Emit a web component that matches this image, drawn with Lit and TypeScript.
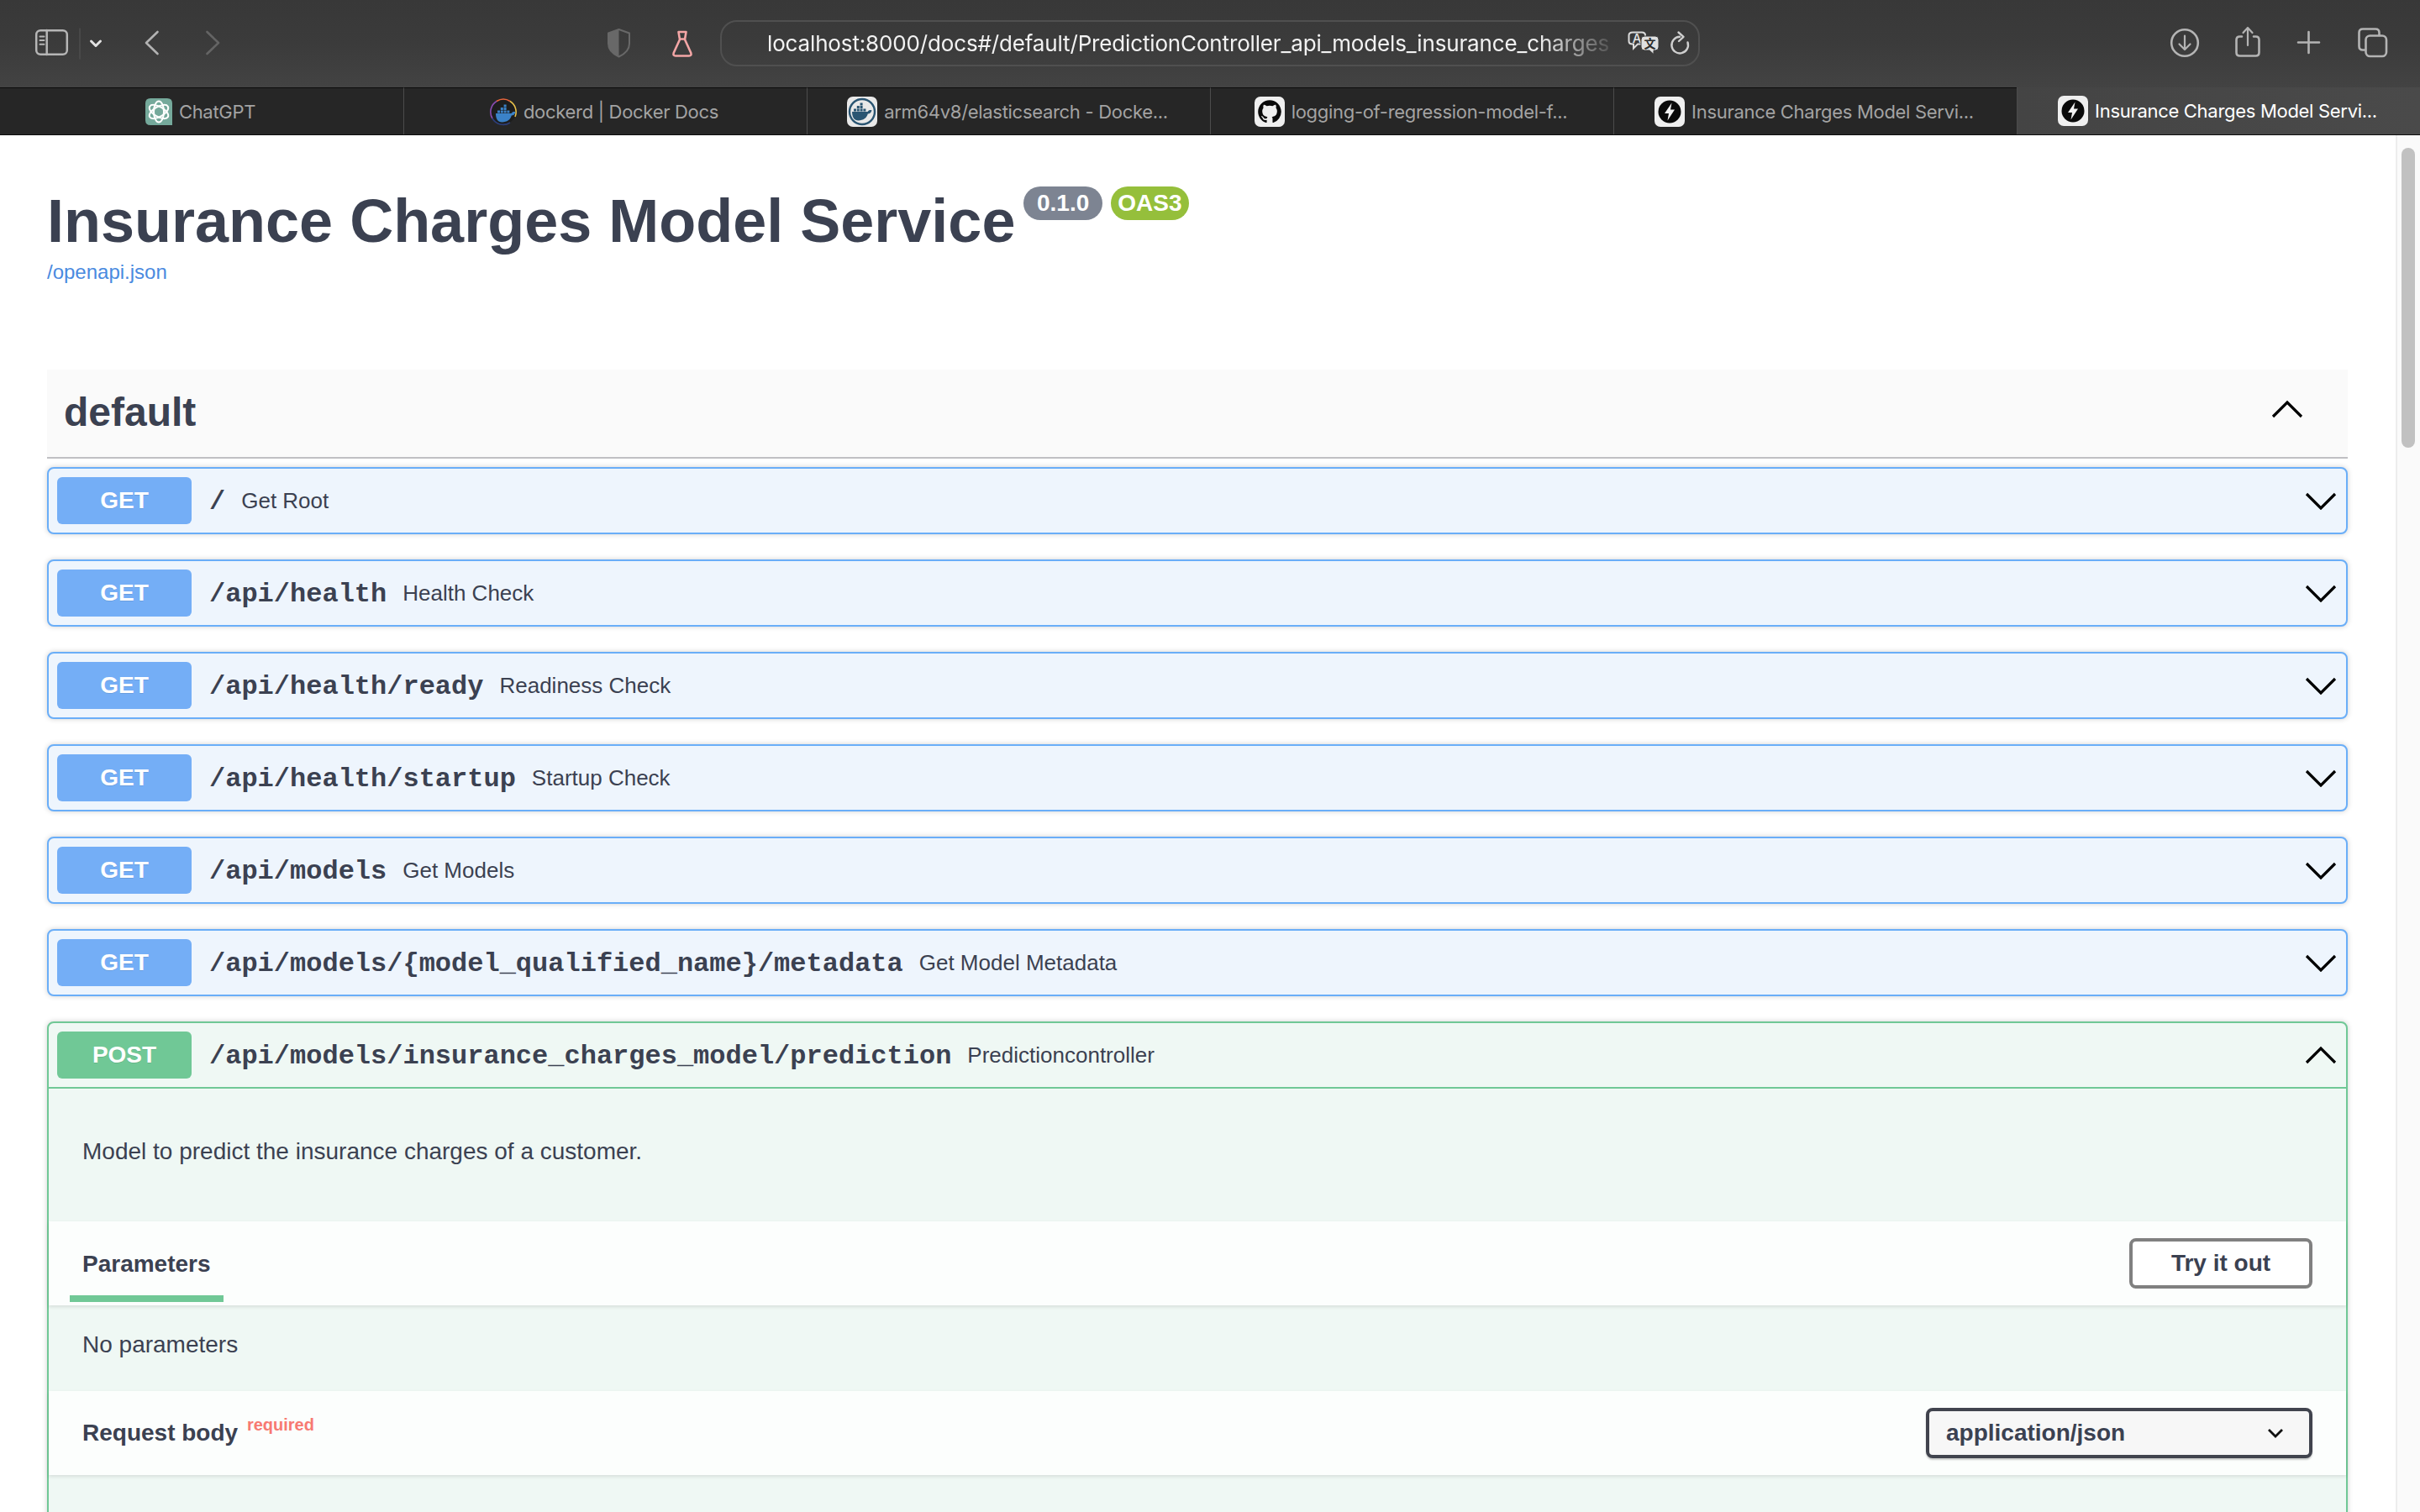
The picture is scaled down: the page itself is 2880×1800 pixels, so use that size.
import { LitElement, css, html, svg } from "lit";
import { customElement } from "lit/decorators.js";

const chevron = (up: boolean) => html`
  <svg class="chev" width="38" height="22" viewBox="0 0 38 22">
    <path d=${up ? "M2 20 L19 3 L36 20" : "M2 3 L19 20 L36 3"} fill="none" stroke="#000" stroke-width="3.2" />
  </svg>
`;

const ROUTES = [
  { path: "/", summary: "Get Root" },
  { path: "/api/health", summary: "Health Check" },
  { path: "/api/health/ready", summary: "Readiness Check" },
  { path: "/api/health/startup", summary: "Startup Check" },
  { path: "/api/models", summary: "Get Models" },
  { path: "/api/models/{model_qualified_name}/metadata", summary: "Get Model Metadata" },
];

const boltIcon = svg`
  <rect width="36" height="36" rx="7" fill="#efefef" />
  <circle cx="18" cy="18" r="13.5" fill="#0a0a0a" />
  <path d="M20.5 7.5 L12 20 H17 L15.5 28.5 L24 15.5 H19 Z" fill="#f2f2f2" />
`;

const dockerWhale = (fill: string) => svg`
  <path fill=${fill} d="M6 16 H24.5 C25.5 14 27.5 13.6 29.5 14.2 C29 17 27 18.5 24.8 18.6 C23.5 23.5 19.5 26.5 13.5 26.5 C8.5 26.5 6 22.5 6 16 Z" />
  <path fill=${fill} d="M8 12.5 h3 v3 h-3z M11.8 12.5 h3 v3 h-3z M15.6 12.5 h3 v3 h-3z M19.4 12.5 h3 v3 h-3z M11.8 9 h3 v3 h-3z M15.6 9 h3 v3 h-3z M15.6 5.5 h3 v3 h-3z" />
`;

const favicons = {
  chatgpt: html`<svg class="fav" width="32" height="32" viewBox="0 0 32 32">
    <path d="M6 0 H26 Q32 0 32 6 V32 H6 Q0 32 0 26 V6 Q0 0 6 0 Z" fill="#75a99b" />
    <g fill="none" stroke="#fff" stroke-width="2">
      <ellipse cx="16" cy="16" rx="6" ry="12.5" />
      <ellipse cx="16" cy="16" rx="6" ry="12.5" transform="rotate(60 16 16)" />
      <ellipse cx="16" cy="16" rx="6" ry="12.5" transform="rotate(120 16 16)" />
    </g>
  </svg>`,
  docker: html`<svg class="fav" width="32" height="36" viewBox="0 0 32 36">
    <circle cx="16" cy="18" r="15" fill="#1d1d1d" />
    <path d="M8 5.5 A15 15 0 0 1 24 5.5" fill="none" stroke="#e8663c" stroke-width="1.6" />
    <path d="M24 5.5 A15 15 0 0 1 30 24" fill="none" stroke="#e8c14a" stroke-width="1.6" />
    <path d="M8 5.5 A15 15 0 0 0 3 26" fill="none" stroke="#8a4bb0" stroke-width="1.6" />
    <path d="M3 26 A15 15 0 0 0 24 31" fill="none" stroke="#2c3e7a" stroke-width="1.6" />
    <g transform="translate(1 4)">${dockerWhale("#3b82c8")}</g>
  </svg>`,
  dockerHub: html`<svg class="fav" width="36" height="36" viewBox="0 0 36 36">
    <rect width="36" height="36" rx="7" fill="#e9e9e9" />
    <circle cx="18" cy="18" r="15" fill="none" stroke="#2a5572" stroke-width="2.4" />
    <g transform="translate(0 2)">${dockerWhale("#2a5572")}</g>
  </svg>`,
  github: html`<svg class="fav" width="36" height="36" viewBox="0 0 36 36">
    <rect width="36" height="36" rx="7" fill="#efefef" />
    <g transform="translate(3.6 3.6) scale(1.2)">
      <path fill="#0a0a0a" d="M12 .5C5.65.5.5 5.65.5 12c0 5.08 3.29 9.39 7.86 10.91.58.11.79-.25.79-.56v-2.15c-3.2.7-3.87-1.36-3.87-1.36-.52-1.33-1.28-1.68-1.28-1.68-1.04-.71.08-.7.08-.7 1.15.08 1.76 1.18 1.76 1.18 1.03 1.76 2.69 1.25 3.35.96.1-.74.4-1.25.73-1.54-2.55-.29-5.24-1.28-5.24-5.69 0-1.26.45-2.28 1.18-3.09-.12-.29-.51-1.46.11-3.05 0 0 .97-.31 3.17 1.18a11 11 0 0 1 5.77 0c2.2-1.49 3.17-1.18 3.17-1.18.63 1.59.23 2.76.11 3.05.74.81 1.18 1.83 1.18 3.09 0 4.42-2.69 5.39-5.25 5.68.41.36.78 1.06.78 2.13v3.16c0 .31.21.67.8.56A11.5 11.5 0 0 0 23.5 12C23.5 5.65 18.35.5 12 .5z" />
    </g>
  </svg>`,
  bolt: html`<svg class="fav" width="36" height="36" viewBox="0 0 36 36">${boltIcon}</svg>`,
};

const TABS = [
  { icon: favicons.chatgpt, title: "ChatGPT" },
  { icon: favicons.docker, title: "dockerd | Docker Docs" },
  { icon: favicons.dockerHub, title: "arm64v8/elasticsearch - Docke..." },
  { icon: favicons.github, title: "logging-of-regression-model-f..." },
  { icon: favicons.bolt, title: "Insurance Charges Model Servi..." },
  { icon: favicons.bolt, title: "Insurance Charges Model Servi...", active: true },
];

@customElement("app-root")
export class AppRoot extends LitElement {
  static styles = css`
    :host {
      display: flex;
      flex-direction: column;
      width: 2880px;
      height: 1800px;
      overflow: hidden;
      background: #fff;
      font-family: "Liberation Sans", Arial, sans-serif;
      color: #3b4151;
    }
    svg {
      display: block;
      flex: none;
    }

    /* browser chrome */
    .toolbar {
      display: flex;
      align-items: center;
      flex: none;
      height: 104px;
      padding: 0 30px 0 36px;
      box-sizing: border-box;
      background: linear-gradient(180deg, #383838 0%, #3b3b3b 50%, #434343 100%);
    }
    .security {
      margin-left: 445px;
    }
    .url {
      display: flex;
      align-items: center;
      width: 1166px;
      height: 55px;
      margin-left: 27px;
      margin-top: -1px;
      padding: 0 8px 0 54px;
      box-sizing: border-box;
      border: 2.5px solid #505050;
      border-radius: 20px;
    }
    .url-text {
      flex: 1;
      min-width: 0;
      white-space: nowrap;
      font: 400 26px Inter, "Liberation Sans", sans-serif;
      letter-spacing: -0.15px;
      color: #f2f2f2;
      -webkit-mask-image: linear-gradient(90deg, #000 90%, transparent 99.5%);
      mask-image: linear-gradient(90deg, #000 90%, transparent 99.5%);
    }
    .actions {
      margin-left: auto;
    }
    .tabs {
      display: grid;
      grid-template-columns: repeat(6, 1fr);
      flex: none;
      height: 57px;
      box-sizing: border-box;
      border-bottom: 1.5px solid #0c0c0c;
    }
    .tab {
      display: flex;
      align-items: center;
      justify-content: center;
      gap: 8px;
      padding-right: 3px;
      box-sizing: border-box;
      background: #262626;
      border-top: 1.5px solid #0c0c0c;
      border-left: 1.5px solid #4c4c4c;
      font: 400 22px Inter, "Liberation Sans", sans-serif;
      letter-spacing: -0.3px;
      color: #a3a3a3;
      white-space: nowrap;
    }
    .tab:first-child {
      border-left: 0;
    }
    .tab.active {
      background: linear-gradient(90deg, #444 0%, #4a4a4a 100%);
      border-top: 0;
      color: #fff;
    }

    /* page */
    .viewport {
      display: flex;
      flex: 1;
      min-height: 0;
    }
    .doc {
      flex: 1;
      min-width: 0;
      padding: 60px 57px 0 56px;
      overflow: hidden;
    }
    .scrollbar {
      flex: none;
      width: 29px;
      box-sizing: border-box;
      padding: 15px 6px 0 5px;
      background: #fafafa;
      border-left: 2px solid #ededed;
    }
    .thumb {
      width: 16px;
      height: 357px;
      border-radius: 8px;
      background: #c1c1c1;
    }
    .title-row {
      display: flex;
      align-items: flex-start;
    }
    h1 {
      margin: 0;
      font-size: 72px;
      line-height: 84px;
      font-weight: 700;
      white-space: nowrap;
    }
    .badge {
      height: 40px;
      margin: 1px 0 0 10px;
      padding: 0 15.5px;
      border-radius: 20px;
      font-size: 28px;
      line-height: 40px;
      font-weight: 700;
      color: #fff;
      background: #7d8492;
    }
    .badge.oas {
      background: #95bf3b;
      padding: 0 8.5px;
    }
    .link {
      display: block;
      font-size: 24px;
      line-height: 37px;
      color: #4a8ae0;
    }
    .tag {
      display: flex;
      align-items: center;
      justify-content: space-between;
      height: 106px;
      margin-top: 98px;
      padding: 0 53px 4px 20px;
      box-sizing: border-box;
      background: #fafafa;
      border-bottom: 2px solid #c0c0c3;
    }
    .tag h2 {
      margin: 2px 0 0;
      font-size: 48px;
      line-height: 60px;
      font-weight: 700;
    }
    .tag .chev {
      margin-bottom: 7px;
    }
    .ops {
      display: flex;
      flex-direction: column;
      gap: 30px;
      margin-top: 10px;
    }
    .op {
      border: 2px solid #6aaef8;
      border-radius: 8px;
      background: #eef5fd;
      box-shadow: 0 0 6px rgba(0, 0, 0, 0.19);
    }
    .op.post {
      padding-bottom: 200px;
      border-color: #70c896;
      background: #eff8f4;
    }
    .summary {
      display: flex;
      align-items: center;
      padding: 10px 11px 10px 10px;
    }
    .post .summary {
      border-bottom: 2px solid #70c896;
    }
    .method {
      flex: none;
      width: 160px;
      height: 56px;
      border-radius: 6px;
      background: #74aef6;
      color: #fff;
      font-size: 28px;
      line-height: 56px;
      font-weight: 700;
      text-align: center;
      text-shadow: 0 1px 0 rgba(0, 0, 0, 0.1);
    }
    .post .method {
      background: #70c896;
    }
    .path {
      padding: 2px 19px 0 21px;
      font: 700 32px "Liberation Mono", monospace;
      white-space: nowrap;
    }
    .desc {
      flex: 1;
      font-size: 26px;
    }
    .intro {
      margin: 0;
      padding: 55px 40px 63px;
      font-size: 28px;
      line-height: 40px;
    }
    .band {
      display: flex;
      align-items: center;
      justify-content: space-between;
      box-sizing: border-box;
      height: 100px;
      padding-right: 40px;
      background: rgba(255, 255, 255, 0.8);
      box-shadow: 0 2px 4px rgba(0, 0, 0, 0.1);
    }
    .band.params {
      padding-left: 25px;
      align-items: flex-start;
    }
    .band.body {
      padding-left: 40px;
    }
    .tab-title {
      box-sizing: border-box;
      height: 96px;
      padding: 0 15px;
      border-bottom: 8px solid #70c896;
      font-size: 28px;
      line-height: 102px;
      font-weight: 700;
    }
    .try {
      align-self: center;
      box-sizing: border-box;
      width: 218px;
      height: 60px;
      border: 4px solid #808080;
      border-radius: 8px;
      background: #fff;
      font-size: 28px;
      line-height: 52px;
      font-weight: 700;
      text-align: center;
    }
    .none {
      box-sizing: border-box;
      height: 102px;
      padding: 27px 40px 0;
      font-size: 28px;
      line-height: 40px;
    }
    .req {
      font-size: 28px;
      font-weight: 700;
    }
    .req sup {
      padding-left: 3px;
      font-size: 20px;
      line-height: 0;
      color: #f77a72;
      vertical-align: 12px;
    }
    .select {
      display: flex;
      align-items: center;
      justify-content: space-between;
      box-sizing: border-box;
      width: 460px;
      height: 60px;
      padding: 0 30px 0 20px;
      border: 4px solid #41444e;
      border-radius: 8px;
      background: #f7f7f7;
      box-shadow: 0 2px 2px rgba(0, 0, 0, 0.2);
      font-size: 28px;
      font-weight: 700;
    }
  `;

  // svg coordinates below are page coordinates, the viewBox crops to each cluster
  private _toolbar() {
    return html`
      <div class="toolbar">
        <svg width="234" height="52" viewBox="36 26 234 52" fill="none" stroke-linecap="round" stroke-linejoin="round">
          <rect x="43.2" y="36.2" width="36.6" height="28.6" rx="5" stroke="#b6b6b6" stroke-width="2.5" />
          <path d="M55.7 36 V65" stroke="#b6b6b6" stroke-width="2.5" />
          <path d="M47.5 43.5 H52.5 M47.5 48 H52.5 M47.5 52.7 H52.5" stroke="#b6b6b6" stroke-width="2" />
          <path d="M95 34 V70" stroke="#4e4e4e" stroke-width="1.5" />
          <path d="M108.5 49 L114 54.5 L119.5 49" stroke="#e2e2e2" stroke-width="3" />
          <path d="M187.5 38 L174 51 L187.5 64" stroke="#b2b2b2" stroke-width="2.6" />
          <path d="M246.5 38 L260 51 L246.5 64" stroke="#646464" stroke-width="2.6" />
        </svg>
        <svg class="security" width="115" height="52" viewBox="715 26 115 52" fill="none" stroke-linejoin="round">
          <path d="M736.5 35 L749 39.5 V52 C749 60 742 65 736.5 67.5 C731 65 724 60 724 52 V39.5 Z" stroke="#686868" stroke-width="2" />
          <path d="M736.5 35 L724 39.5 V52 C724 60 731 65 736.5 67.5 Z" fill="#686868" />
          <path d="M807.5 38 H816.5 L815 47 L822.3 63 Q823.3 66.5 820 66.5 H804 Q800.7 66.5 801.7 63 L809 47 Z M808.5 46.5 H815.5" stroke="#f4a6a6" stroke-width="2.6" />
        </svg>
        <div class="url">
          <span class="url-text">localhost:8000/docs#/default/PredictionController_api_models_insurance_charges</span>
          <svg width="80" height="52" viewBox="1932 26 80 52" fill="none">
            <path d="M1942 38.5 H1953 Q1957 38.5 1957 42 V49 Q1957 52.5 1953 52.5 H1948 L1943 57.5 V52.5 H1942 Q1937.5 52.5 1937.5 49 V42 Q1937.5 38.5 1942 38.5 Z" stroke="#dcdcdc" stroke-width="2" />
            <text x="1947" y="51" text-anchor="middle" font-family="Inter, sans-serif" font-size="15" font-weight="500" fill="#e4e4e4">A</text>
            <path d="M1956 43 H1969 Q1973 43 1973 47 V56 Q1973 60 1969 60 H1967 V64.5 L1962 60 H1956 Q1952 60 1952 56 V47 Q1952 43 1956 43 Z" fill="#e0e0e0" stroke="#3b3b3b" stroke-width="1" />
            <text x="1962.5" y="57" text-anchor="middle" font-family="'Noto Sans CJK SC', sans-serif" font-size="14" font-weight="700" fill="#2c2c2c">文</text>
            <path d="M1998 43.8 A9.8 9.8 0 1 0 2007.5 50.5" stroke="#cfcfcf" stroke-width="2.4" stroke-linecap="round" />
            <path d="M1996.5 38.5 L2002.5 43.8 L1997 49" stroke="#cfcfcf" stroke-width="2.4" stroke-linecap="round" stroke-linejoin="round" />
          </svg>
        </div>
        <svg class="actions" width="280" height="52" viewBox="2570 26 280 52" fill="none" stroke="#b4b4b4" stroke-width="2.6" stroke-linecap="round" stroke-linejoin="round">
          <circle cx="2600" cy="51" r="15.8" />
          <path d="M2600 42.5 V58.5 M2593.5 52.5 L2600 59 L2606.5 52.5" stroke-width="2.2" />
          <path d="M2668 43.5 H2665.5 Q2661.5 43.5 2661.5 47.5 V62.5 Q2661.5 66.5 2665.5 66.5 H2684.5 Q2688.5 66.5 2688.5 62.5 V47.5 Q2688.5 43.5 2684.5 43.5 H2682" />
          <path d="M2675 33 V54 M2669.5 39 L2675 33 L2680.5 39" stroke-width="2.2" />
          <path d="M2747.5 38 V63 M2735 50.5 H2760" />
          <path d="M2815 59.5 H2812 Q2807.5 59.5 2807.5 55 V39 Q2807.5 34.5 2812 34.5 H2827 Q2831.5 34.5 2831.5 39 V42" />
          <rect x="2815.5" y="42.5" width="24.5" height="24.5" rx="5" />
        </svg>
      </div>
    `;
  }

  private _tabs() {
    return html`
      <div class="tabs">
        ${TABS.map(
          (t) => html`<div class="tab ${t.active ? "active" : ""}">${t.icon}<span>${t.title}</span></div>`
        )}
      </div>
    `;
  }

  private _postBlock() {
    return html`
      <div class="op post">
        <div class="summary">
          <span class="method">POST</span>
          <span class="path">/api/models/insurance_charges_model/prediction</span>
          <span class="desc">Predictioncontroller</span>
          ${chevron(true)}
        </div>
        <p class="intro">Model to predict the insurance charges of a customer.</p>
        <div class="band params">
          <div class="tab-title">Parameters</div>
          <div class="try">Try it out</div>
        </div>
        <div class="none">No parameters</div>
        <div class="band body">
          <div class="req">Request body <sup>required</sup></div>
          <div class="select">
            <span>application/json</span>
            <svg width="20" height="12" viewBox="0 0 20 12">
              <path d="M2 2 L10 10 L18 2" fill="none" stroke="#111" stroke-width="2.8" />
            </svg>
          </div>
        </div>
      </div>
    `;
  }

  render() {
    return html`
      ${this._toolbar()} ${this._tabs()}
      <div class="viewport">
        <div class="doc">
          <div class="title-row">
            <h1>Insurance Charges Model Service</h1>
            <span class="badge">0.1.0</span>
            <span class="badge oas">OAS3</span>
          </div>
          <a class="link">/openapi.json</a>
          <div class="tag">
            <h2>default</h2>
            ${chevron(true)}
          </div>
          <div class="ops">
            ${ROUTES.map(
              (r) => html`
                <div class="op">
                  <div class="summary">
                    <span class="method">GET</span>
                    <span class="path">${r.path}</span>
                    <span class="desc">${r.summary}</span>
                    ${chevron(false)}
                  </div>
                </div>
              `
            )}
            ${this._postBlock()}
          </div>
        </div>
        <div class="scrollbar"><div class="thumb"></div></div>
      </div>
    `;
  }
}
